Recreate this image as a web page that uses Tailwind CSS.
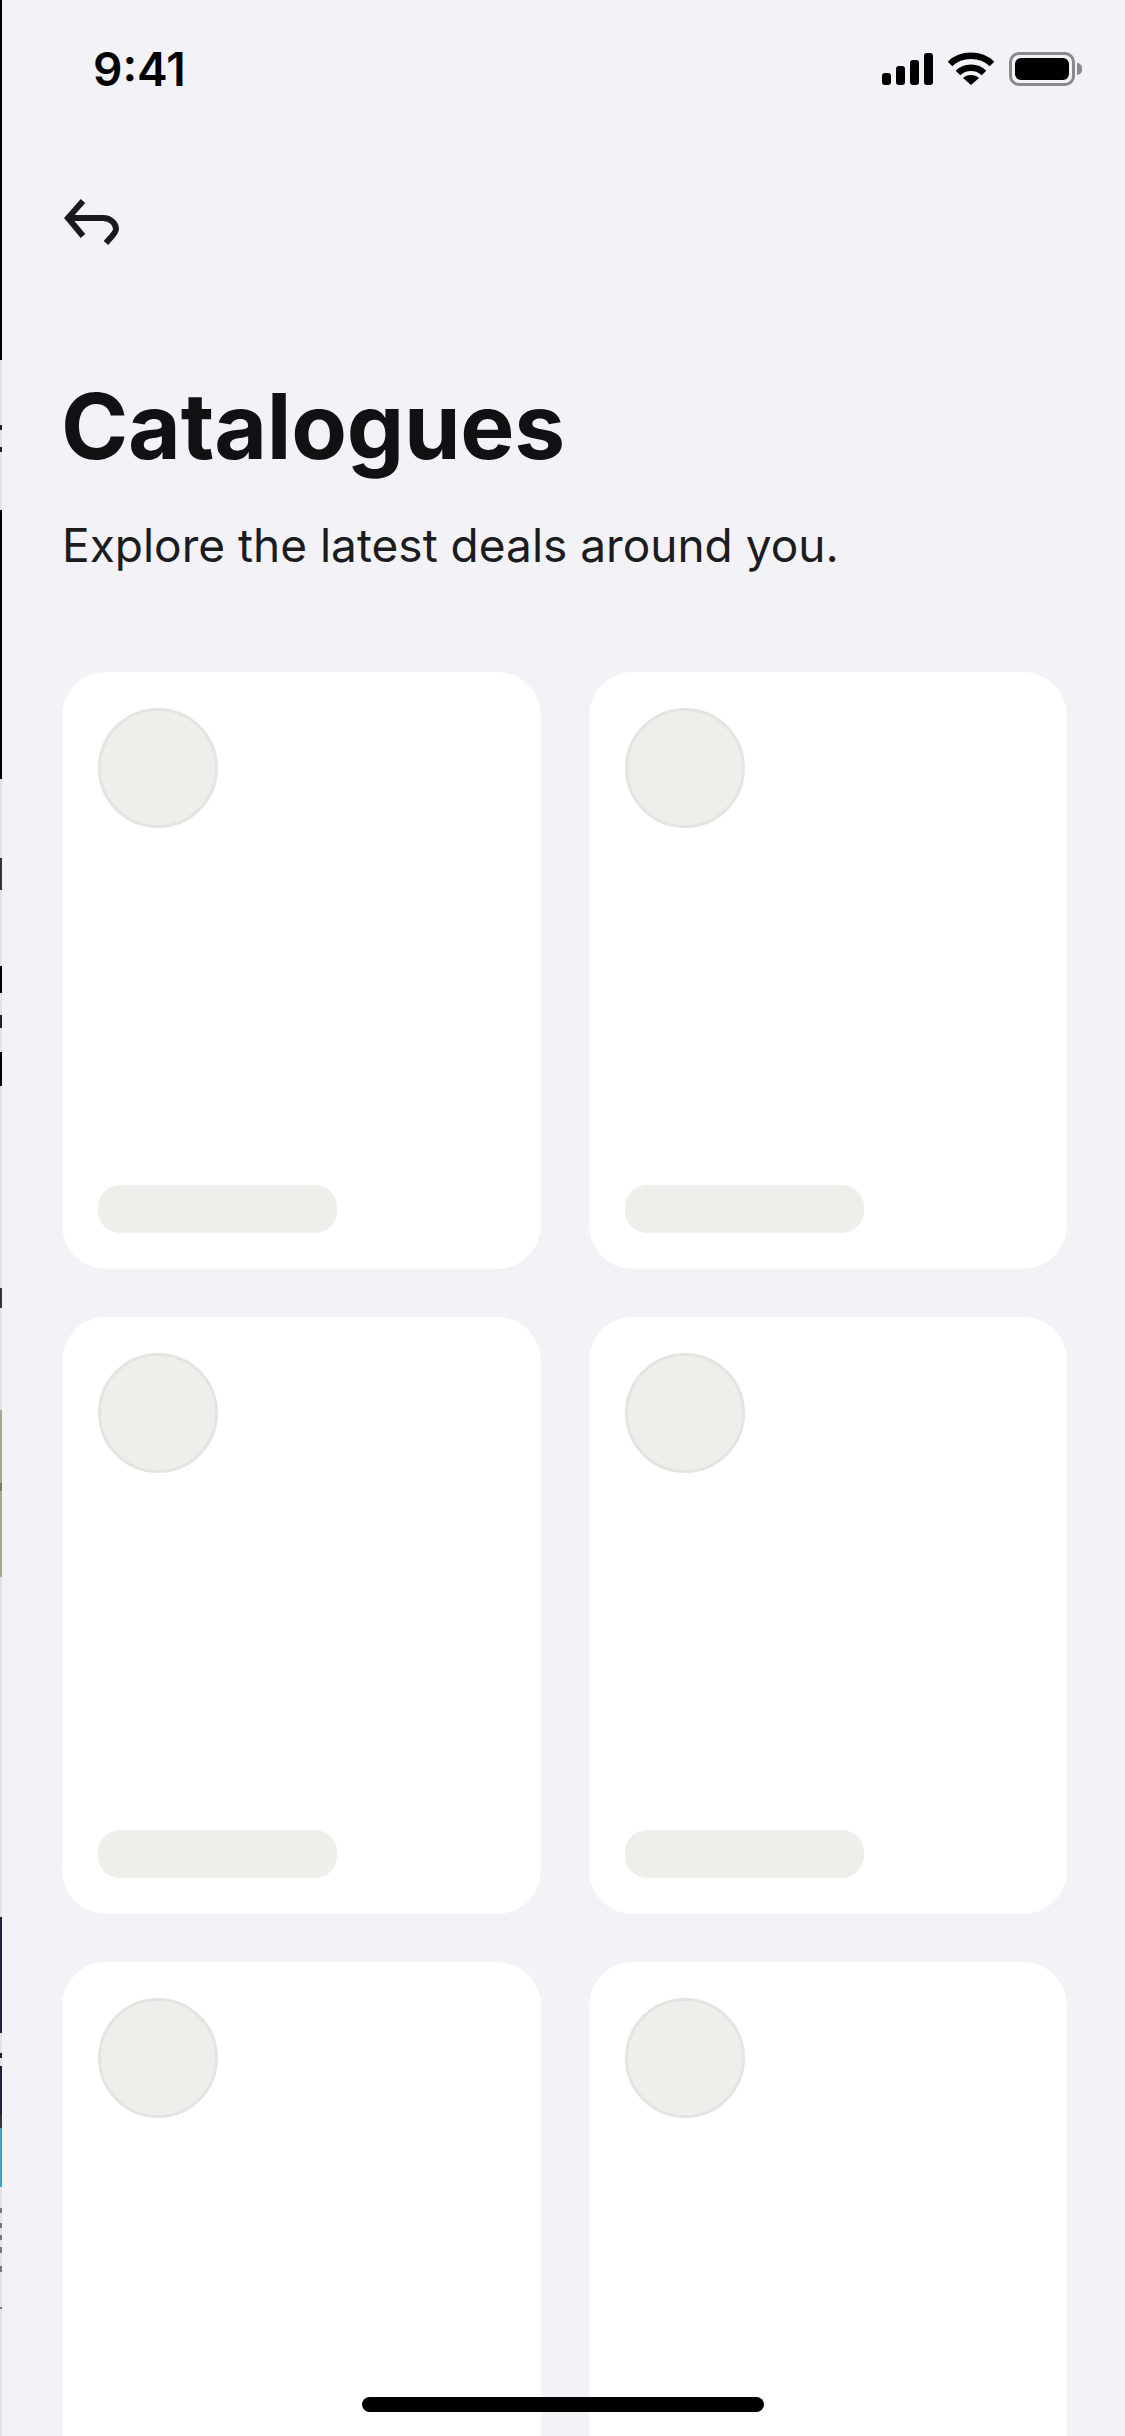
<!DOCTYPE html>
<html>
  <head>
    <meta charset="UTF-8" />
    <title>Catalogues</title>
    <script src="https://cdn.jsdelivr.net/npm/@tailwindcss/browser@4"></script>
  </head>
  <body>
    <div class="relative h-[2436px] w-[1125px] overflow-hidden bg-[#f2f2f7] font-['Inter',sans-serif] text-[#111113]">
      <!-- status bar -->
      <div class="flex h-[138px] items-center justify-between pl-[93px] pr-[43px]">
        <span class="text-[46px] leading-none font-semibold text-black">9:41</span>
        <div class="flex items-center gap-[15px]">
          <svg width="51" height="32" viewBox="0 0 51 32" fill="#000">
            <rect x="0" y="20" width="9" height="12" rx="3" />
            <rect x="14" y="13" width="9" height="19" rx="3" />
            <rect x="28" y="7" width="9" height="25" rx="3" />
            <rect x="42" y="0" width="9" height="32" rx="3" />
          </svg>
          <svg width="46" height="34" viewBox="0 0 46 34" fill="none" stroke="#000" stroke-width="6.5">
            <path d="M2 12 C13 1 33 1 44 12" />
            <path d="M10 21 C17 14 29 14 36 21" />
            <path d="M23 33 L15 26 C19 22 27 22 31 26 Z" fill="#000" stroke="none" />
          </svg>
          <div class="flex items-center gap-[2px]">
            <div class="flex h-[34px] w-[66px] rounded-[10px] border-[3px] border-[#8a8a8e] p-[3px]">
              <div class="flex-1 rounded-[6px] bg-black"></div>
            </div>
            <div class="h-[12px] w-[5px] rounded-r-full bg-[#8a8a8e]"></div>
          </div>
        </div>
      </div>

      <!-- back -->
      <div class="mt-[58px] pl-[62px]">
        <svg width="60" height="52" viewBox="0 0 60 52" fill="none" stroke="#1a1a1c" stroke-width="6">
          <path d="M21 5 L6 22 L21 40" />
          <path d="M6 22 H41 C49 22 54 28 54 33 C54 37 49 41 44 47" />
        </svg>
      </div>

      <!-- heading -->
      <div class="mt-[126px] pl-[62px]">
        <h1 class="-ml-px text-[91px] leading-[104px] font-bold tracking-[-0.25px]">Catalogues</h1>
        <p class="mt-[37px] text-[46px] leading-[60px] text-[#1c1c1e]">Explore the latest deals around you.</p>
      </div>

      <!-- cards -->
      <div class="mt-[97px] grid grid-cols-2 gap-x-[48px] gap-y-[48px] pl-[62px] pr-[58px]">
        <div class="flex h-[597px] flex-col justify-between rounded-[44px] bg-white p-[36px]">
          <div class="h-[120px] w-[120px] rounded-full border-[3px] border-[#e4e4e2] bg-[#efeeeb]"></div>
          <div class="h-[48px] w-[239px] rounded-[22px] bg-[#efeeeb]"></div>
        </div>
        <div class="flex h-[597px] flex-col justify-between rounded-[44px] bg-white p-[36px]">
          <div class="h-[120px] w-[120px] rounded-full border-[3px] border-[#e4e4e2] bg-[#efeeeb]"></div>
          <div class="h-[48px] w-[239px] rounded-[22px] bg-[#efeeeb]"></div>
        </div>
        <div class="flex h-[597px] flex-col justify-between rounded-[44px] bg-white p-[36px]">
          <div class="h-[120px] w-[120px] rounded-full border-[3px] border-[#e4e4e2] bg-[#efeeeb]"></div>
          <div class="h-[48px] w-[239px] rounded-[22px] bg-[#efeeeb]"></div>
        </div>
        <div class="flex h-[597px] flex-col justify-between rounded-[44px] bg-white p-[36px]">
          <div class="h-[120px] w-[120px] rounded-full border-[3px] border-[#e4e4e2] bg-[#efeeeb]"></div>
          <div class="h-[48px] w-[239px] rounded-[22px] bg-[#efeeeb]"></div>
        </div>
        <div class="flex h-[597px] flex-col justify-between rounded-[44px] bg-white p-[36px]">
          <div class="h-[120px] w-[120px] rounded-full border-[3px] border-[#e4e4e2] bg-[#efeeeb]"></div>
          <div class="h-[48px] w-[239px] rounded-[22px] bg-[#efeeeb]"></div>
        </div>
        <div class="flex h-[597px] flex-col justify-between rounded-[44px] bg-white p-[36px]">
          <div class="h-[120px] w-[120px] rounded-full border-[3px] border-[#e4e4e2] bg-[#efeeeb]"></div>
          <div class="h-[48px] w-[239px] rounded-[22px] bg-[#efeeeb]"></div>
        </div>
      </div>

      <!-- home indicator -->
      <div class="absolute bottom-[24px] left-[362px] h-[15px] w-[402px] rounded-full bg-black"></div>

      <!-- sliver of the previous screen on the left edge -->
      <div class="absolute top-0 left-0 flex h-full w-[2px] flex-col bg-[#e3e3e5]">
        <div class="h-[360px] shrink-0 bg-black"></div>
        <div class="h-[65px] shrink-0"></div>
        <div class="h-[5px] shrink-0 bg-[#222222]"></div>
        <div class="h-[17px] shrink-0"></div>
        <div class="h-[5px] shrink-0 bg-[#222222]"></div>
        <div class="h-[58px] shrink-0"></div>
        <div class="h-[269px] shrink-0 bg-black"></div>
        <div class="h-[79px] shrink-0"></div>
        <div class="h-[32px] shrink-0 bg-[#333333]"></div>
        <div class="h-[76px] shrink-0"></div>
        <div class="h-[27px] shrink-0 bg-black"></div>
        <div class="h-[22px] shrink-0"></div>
        <div class="h-[13px] shrink-0 bg-[#222222]"></div>
        <div class="h-[24px] shrink-0"></div>
        <div class="h-[34px] shrink-0 bg-black"></div>
        <div class="h-[202px] shrink-0"></div>
        <div class="h-[20px] shrink-0 bg-[#333333]"></div>
        <div class="h-[102px] shrink-0"></div>
        <div class="h-[73px] shrink-0 bg-[#aaa599]"></div>
        <div class="h-[8px] shrink-0 bg-[#7d7868]"></div>
        <div class="h-[86px] shrink-0 bg-[#aaa599]"></div>
        <div class="h-[340px] shrink-0"></div>
        <div class="h-[116px] shrink-0 bg-[#1e2236]"></div>
        <div class="h-[20px] shrink-0"></div>
        <div class="h-[5px] shrink-0 bg-[#1e2236]"></div>
        <div class="h-[8px] shrink-0"></div>
        <div class="h-[49px] shrink-0 bg-[#1e2236]"></div>
        <div class="h-[13px] shrink-0 bg-[#38363a]"></div>
        <div class="h-[59px] shrink-0 bg-[#3b9fd0]"></div>
        <div class="h-[21px] shrink-0"></div>
        <div class="h-[5px] shrink-0 bg-[#77777a]"></div>
        <div class="h-[10px] shrink-0"></div>
        <div class="h-[5px] shrink-0 bg-[#77777a]"></div>
        <div class="h-[7px] shrink-0"></div>
        <div class="h-[5px] shrink-0 bg-[#77777a]"></div>
        <div class="h-[7px] shrink-0"></div>
        <div class="h-[6px] shrink-0 bg-[#77777a]"></div>
        <div class="h-[13px] shrink-0"></div>
        <div class="h-[6px] shrink-0 bg-[#77777a]"></div>
        <div class="h-[35px] shrink-0"></div>
        <div class="h-[2px] shrink-0 bg-[#77777a]"></div>
      </div>
    </div>
  </body>
</html>
